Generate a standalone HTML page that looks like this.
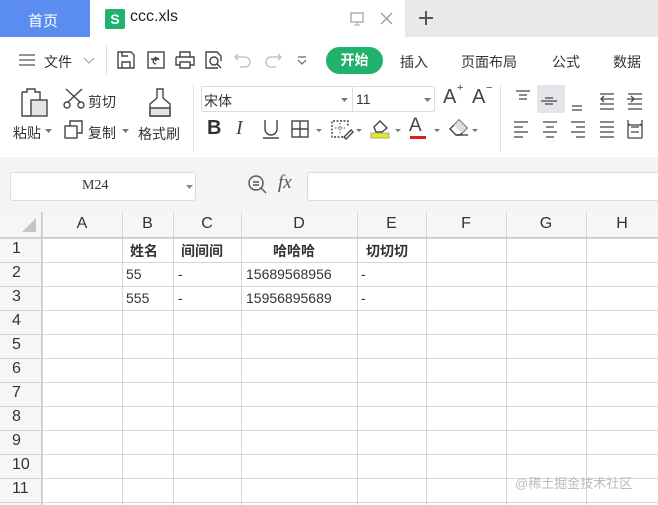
<!DOCTYPE html>
<html><head><meta charset="utf-8"><style>
*{margin:0;padding:0;box-sizing:border-box}
body{width:658px;height:505px;overflow:hidden;background:#fff;font-family:"Liberation Sans","Noto Sans CJK SC",sans-serif;position:relative;color:#333}
.a{position:absolute}
.t{font-size:14px;white-space:nowrap}
svg{position:absolute;overflow:visible}
.ic{fill:none;stroke:#444;stroke-width:1.4}
.cell{position:absolute;font-size:14px;white-space:nowrap}
</style></head><body>
<!-- tab bar -->
<div class="a" style="left:0;top:0;width:658px;height:37px;background:#e9e9ea"></div>
<div class="a" style="left:0;top:0;width:90px;height:37px;background:#5b8def"></div>
<div class="a t" style="left:28px;top:10px;color:#fff;font-size:15px">首页</div>
<div class="a" style="left:90px;top:0;width:315px;height:37px;background:#fff"></div>
<div class="a" style="left:105px;top:9px;width:20px;height:20px;background:#20b26b;border-radius:2px;color:#fff;font-size:14px;text-align:center;line-height:20px;font-weight:bold">S</div>
<div class="a t" style="left:130px;top:8px;font-size:16px;color:#222">ccc.xls</div>
<svg style="left:350px;top:12px" width="16" height="16"><rect x="1" y="1" width="12" height="9" class="ic" stroke="#999" style="stroke:#aaa"/><path d="M7 10v3M4 13h6" style="stroke:#aaa;fill:none"/></svg>
<svg style="left:380px;top:12px" width="14" height="14"><path d="M1 1L12 12M12 1L1 12" style="stroke:#999;stroke-width:1.3"/></svg>
<svg style="left:418px;top:10px" width="16" height="16"><path d="M8 1v14M1 8h14" style="stroke:#555;stroke-width:2"/></svg>
<!-- toolbar row -->
<div class="a" style="left:0;top:37px;width:658px;height:120px;background:#fff"></div>
<svg style="left:19px;top:54px" width="16" height="12"><path d="M0 1h16M0 6h16M0 11h16" style="stroke:#555;stroke-width:1.3"/></svg>
<div class="a t" style="left:44px;top:52px">文件</div>
<svg style="left:83px;top:57px" width="12" height="8"><path d="M1 1l5 5 5-5" style="stroke:#999;fill:none"/></svg>
<div class="a" style="left:106px;top:46px;width:1px;height:28px;background:#ddd"></div>
<svg style="left:117px;top:51px" width="18" height="18"><path d="M1 1h13l3 3v13H1z M5 17v-6h8v6 M5 1v4h6" class="ic"/></svg>
<svg style="left:147px;top:51px" width="18" height="18"><rect x="1" y="1" width="16" height="16" class="ic"/><path d="M4 8h6M8 6l2 2-2 2M9 13a3 3 0 1 1 3-4" class="ic"/></svg>
<svg style="left:175px;top:51px" width="20" height="18"><path d="M5 6V1h10v5M1 6h18v8h-4M5 14H1V6M5 11h10v6H5z" class="ic"/></svg>
<svg style="left:205px;top:51px" width="18" height="18"><path d="M13 17H1V1h11l4 4v5" class="ic"/><circle cx="9" cy="10" r="4" class="ic"/><path d="M12 13l4 4" class="ic"/></svg>
<svg style="left:234px;top:52px" width="18" height="16"><path d="M4 2L1 5l3 3M1 5h10a5 5 0 0 1 0 10H6" style="stroke:#bbb;fill:none;stroke-width:1.3"/></svg>
<svg style="left:264px;top:52px" width="18" height="16"><path d="M14 2l3 3-3 3M17 5H7a5 5 0 0 0 0 10h5" style="stroke:#bbb;fill:none;stroke-width:1.3"/></svg>
<svg style="left:297px;top:56px" width="10" height="10"><path d="M1 1h8M1 4l4 4 4-4" style="stroke:#666;fill:none;stroke-width:1.2"/></svg>
<div class="a" style="left:326px;top:47px;width:57px;height:27px;background:#20b26b;border-radius:14px;color:#fff;font-size:14px;font-weight:bold;text-align:center;line-height:27px">开始</div>
<div class="a t" style="left:400px;top:52px">插入</div>
<div class="a t" style="left:461px;top:52px">页面布局</div>
<div class="a t" style="left:552px;top:52px">公式</div>
<div class="a t" style="left:613px;top:52px">数据</div>
<!-- ribbon -->
<svg style="left:21px;top:88px" width="28" height="30"><path d="M1 4h5V1h8v3h5v8" class="ic"/><path d="M1 4v24h9" class="ic"/><rect x="10" y="12" width="16" height="16" style="fill:#e4e4e4;stroke:#444;stroke-width:1.4"/></svg>
<div class="a t" style="left:13px;top:123px">粘贴</div>
<svg style="left:45px;top:129px" width="8" height="5"><path d="M0 0h7l-3.5 4z" fill="#777"/></svg>
<svg style="left:63px;top:88px" width="22" height="20"><path d="M3 1l14 13M19 1L5 14" class="ic"/><circle cx="4" cy="17" r="3" class="ic"/><circle cx="18" cy="17" r="3" class="ic"/></svg>
<div class="a t" style="left:88px;top:92px">剪切</div>
<svg style="left:64px;top:120px" width="20" height="20"><rect x="1" y="6" width="12" height="12" class="ic"/><path d="M6 6V1h12v12h-5" class="ic"/></svg>
<div class="a t" style="left:88px;top:123px">复制</div>
<svg style="left:122px;top:129px" width="8" height="5"><path d="M0 0h7l-3.5 4z" fill="#777"/></svg>
<svg style="left:148px;top:88px" width="24" height="30"><path d="M9 1h6v9l7 6v12H2V16l7-6z" class="ic"/><path d="M2 20h20v8H2z" style="fill:#e4e4e4;stroke:#444;stroke-width:1.4"/></svg>
<div class="a t" style="left:138px;top:124px">格式刷</div>
<div class="a" style="left:193px;top:84px;width:1px;height:68px;background:#e4e4e4"></div>
<div class="a" style="left:201px;top:86px;width:234px;height:26px;border:1px solid #ddd;border-radius:2px"></div>
<div class="a" style="left:352px;top:86px;width:1px;height:26px;background:#ddd"></div>
<div class="a t" style="left:204px;top:91px;font-size:14px">宋体</div>
<svg style="left:341px;top:98px" width="7" height="4"><path d="M0 0h7l-3.5 4z" fill="#777"/></svg>
<div class="a t" style="left:356px;top:91px">11</div>
<svg style="left:424px;top:98px" width="7" height="4"><path d="M0 0h7l-3.5 4z" fill="#777"/></svg>
<div class="a t" style="left:443px;top:86px;font-size:20px;color:#444">A</div><div class="a t" style="left:457px;top:82px;font-size:11px;color:#444">+</div>
<div class="a t" style="left:472px;top:86px;font-size:20px;color:#444">A</div><div class="a t" style="left:486px;top:82px;font-size:11px;color:#444">−</div>
<div class="a t" style="left:207px;top:117px;font-size:20px;font-weight:bold;color:#333">B</div>
<div class="a" style="left:236px;top:117px;font-size:20px;font-family:'Liberation Serif',serif;font-style:italic;color:#444">I</div>
<svg style="left:262px;top:119px" width="18" height="20"><path d="M3 1v9a6 6 0 0 0 12 0V1M1 19h16" class="ic"/></svg>
<svg style="left:291px;top:120px" width="18" height="18"><rect x="1" y="1" width="16" height="16" class="ic"/><path d="M9 1v16M1 9h16" class="ic"/></svg>
<svg style="left:316px;top:129px" width="6" height="4"><path d="M0 0h6l-3 3z" fill="#777"/></svg>
<svg style="left:331px;top:120px" width="22" height="20"><path d="M12 17H1V1h16v6" class="ic" style="stroke-dasharray:2 1.5"/><path d="M9 3v10M4 8h10" style="stroke:#444;stroke-dasharray:1.5 1.5"/><path d="M13 17l7-7 2 2-7 7z" class="ic"/></svg>
<svg style="left:356px;top:129px" width="6" height="4"><path d="M0 0h6l-3 3z" fill="#777"/></svg>
<svg style="left:370px;top:117px" width="22" height="22"><path d="M4 10L10 4l7 7-5 4H6z" class="ic"/><rect x="1" y="16" width="18" height="5" fill="#e8e81c" stroke="#999" stroke-width=".8"/></svg>
<svg style="left:395px;top:129px" width="6" height="4"><path d="M0 0h6l-3 3z" fill="#777"/></svg>
<div class="a t" style="left:409px;top:115px;font-size:19px;color:#444">A</div>
<div class="a" style="left:410px;top:136px;width:16px;height:3px;background:#e01b1b"></div>
<svg style="left:434px;top:129px" width="6" height="4"><path d="M0 0h6l-3 3z" fill="#777"/></svg>
<svg style="left:449px;top:119px" width="20" height="18"><path d="M1 10l9-9 8 8-7 7H7z" class="ic"/><path d="M10 1l8 8-5 5-8-8z" fill="#ddd"/><path d="M7 16h12" class="ic"/></svg>
<svg style="left:472px;top:129px" width="6" height="4"><path d="M0 0h6l-3 3z" fill="#777"/></svg>
<div class="a" style="left:500px;top:84px;width:1px;height:68px;background:#e4e4e4"></div>
<div class="a" style="left:537px;top:85px;width:28px;height:28px;background:#e3e5e8;border-radius:2px"></div>
<svg style="left:514px;top:90px" width="144" height="50"><g style="stroke:#444;stroke-width:1.3;fill:none">
<path d="M2 1h14M5 5h8M5 9h8"/>
<path d="M27 11h16M31 8h8M31 14h8"/>
<path d="M58 16h10M58 20h10"/>
<path d="M86 4h14M92 9h8M86 14h14M86 19h14M90 6l-3 3 3 3M87 9h6"/>
<path d="M114 4h14M120 9h8M114 14h14M114 19h14M113 9h6M117 6l3 3-3 3"/>
<path d="M0 32h14M0 37h9M0 42h14M0 47h9"/>
<path d="M29 32h14M32 37h8M29 42h14M32 47h8"/>
<path d="M57 32h14M62 37h9M57 42h14M62 47h9"/>
<path d="M86 32h14M86 37h14M86 42h14M86 47h14"/>
<path d="M114 30v18M128 30v18M114 48h14M117 37h8M117 42h8M116 34l-2 2M126 34l2 2M115 35h12"/>
</g></svg>
<!-- gray area -->
<div class="a" style="left:0;top:157px;width:658px;height:55px;background:#f3f4f5"></div>
<div class="a" style="left:10px;top:172px;width:186px;height:29px;background:#fff;border:1px solid #dcdcdc;border-radius:3px"></div>
<div class="a" style="left:82px;top:178px;font-size:14px;font-family:'Liberation Serif','Noto Serif CJK SC',serif;color:#333">M24</div>
<svg style="left:186px;top:185px" width="7" height="4"><path d="M0 0h7l-3.5 4z" fill="#888"/></svg>
<svg style="left:248px;top:175px" width="22" height="22"><circle cx="8" cy="8" r="7" class="ic" style="stroke:#555"/><path d="M5 7h6M5 10h6M13 13l5 5" class="ic" style="stroke:#555"/></svg>
<div class="a" style="left:278px;top:172px;font-size:19px;font-family:'Liberation Serif',serif;font-style:italic;color:#555">fx</div>
<div class="a" style="left:307px;top:172px;width:360px;height:29px;background:#fff;border:1px solid #dcdcdc;border-radius:3px"></div>
<!-- grid header -->
<div class="a" style="left:0;top:212px;width:658px;height:26px;background:#f5f6f8"></div>
<div class="a" style="left:0;top:238px;width:42px;height:267px;background:#f5f6f8"></div>
<svg style="left:22px;top:218px" width="14" height="14"><path d="M14 0v14H0z" fill="#c4c4c4"/></svg>
<div id="g"></div>
<div class="a" style="left:515px;top:473px;font-size:13px;color:#bbb">@稀土掘金技术社区</div>
<script>
var cols=[42,122,173,241,357,426,506,586,658],names="ABCDEFGH";
var h='';
for(var i=0;i<cols.length;i++){h+='<div class="a" style="left:'+cols[i]+'px;top:212px;width:1px;height:293px;background:#d4d6da"></div>';}
for(var i=0;i<8;i++){h+='<div class="cell" style="left:'+cols[i]+'px;width:'+(cols[i+1]-cols[i])+'px;top:215px;text-align:center;font-size:16px;color:#333">'+names[i]+'</div>';}
for(var r=0;r<=11;r++){var y=238+r*24;h+='<div class="a" style="left:0;top:'+y+'px;width:658px;height:1px;background:#d4d6da"></div>';
 if(r<11)h+='<div class="cell" style="left:12px;top:'+(y+2)+'px;font-size:16px;color:#333">'+(r+1)+'</div>';}
h+='<div class="a" style="left:0;top:237px;width:658px;height:1px;background:#c8cacd"></div>';
h+='<div class="a" style="left:41px;top:212px;width:1px;height:293px;background:#c8cacd"></div>';
function c(x,y,t,s){h+='<div class="cell" style="left:'+x+'px;top:'+y+'px;'+(s||'')+'">'+t+'</div>';}
var b='font-weight:bold;font-family:"Noto Serif CJK SC","Noto Sans CJK SC",serif;font-size:15px;color:#111';
c(130,241,'姓名',b);c(181,241,'间间间',b);c(273,241,'哈哈哈',b);c(366,241,'切切切',b);
c(126,266,'55');c(178,266,'-');c(246,266,'15689568956');c(361,266,'-');
c(126,290,'555');c(178,290,'-');c(246,290,'15956895689');c(361,290,'-');
document.getElementById('g').outerHTML=h;
</script>
</body></html>
